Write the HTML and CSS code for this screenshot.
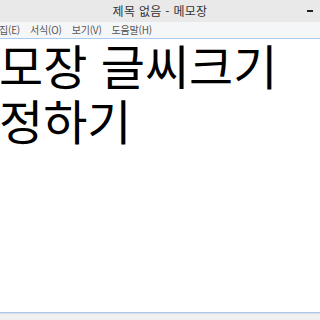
FILE: index.html
```html
<!DOCTYPE html>
<html lang="ko">
<head>
<meta charset="utf-8">
<link rel="stylesheet" href="styles.css">
</head>
<body>
<div class="window">
  <div class="titlebar">
    <span class="title">제목 없음 - 메모장</span>
    <span class="min"></span>
  </div>
  <div class="menubar">
    <span class="item">집(E)</span>
    <span class="item">서식(O)</span>
    <span class="item">보기(V)</span>
    <span class="item">도움말(H)</span>
  </div>
  <div class="editor">
    <div class="text">
      <div class="line">모장 글씨크기</div>
      <div class="line">정하기</div>
    </div>
  </div>
  <div class="statusbar"></div>
</div>
</body>
</html>
```
FILE: styles.css
```css
html, body {
  margin: 0;
  padding: 0;
  width: 320px;
  height: 320px;
  overflow: hidden;
  background: #ffffff;
}
.window {
  display: flex;
  flex-direction: column;
  width: 320px;
  height: 320px;
  font-family: "Noto Sans CJK KR", "Noto Sans", sans-serif;
}
.titlebar {
  height: 22px;
  background: #e9e9e9;
  display: flex;
  align-items: center;
  justify-content: center;
  position: relative;
}
.title {
  font-size: 12px;
  line-height: 14px;
  color: #333;
  letter-spacing: 0.3px;
}
.min {
  position: absolute;
  right: 7px;
  top: 10px;
  width: 6px;
  height: 2px;
  background: #222;
}
.menubar {
  height: 16px;
  background: #f5f6f7;
  border-bottom: 1px solid #a9cbee;
  display: flex;
  align-items: center;
  gap: 10px;
  margin-left: -1px;
}
.item {
  font-size: 10px;
  line-height: 12px;
  color: #555;
  letter-spacing: -0.2px;
}
.editor {
  flex: 1;
  background: #fff;
  border-bottom: 1px solid #a9cbee;
}
.text {
  margin-top: -2px;
}
.line {
  font-size: 48px;
  font-weight: 400;
  line-height: 55px;
  color: #000;
  letter-spacing: 0;
  white-space: nowrap;
  margin-left: -1px;
}
.statusbar {
  height: 6px;
  background: #f0f0f0;
  border-top: 1px solid #dcdcdc;
}
```
